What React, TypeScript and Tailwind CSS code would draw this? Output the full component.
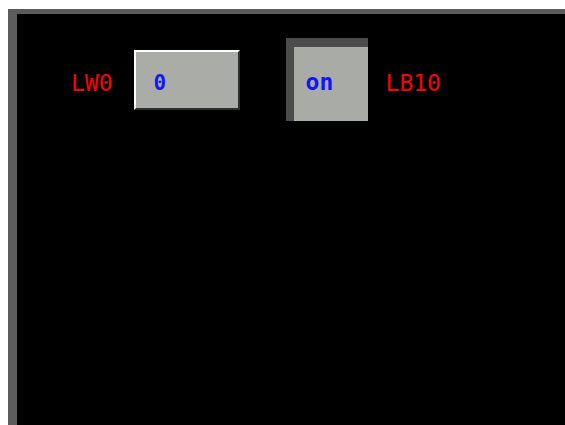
import React from 'react';

const mono = { fontFamily: '"DejaVu Sans Mono", "Liberation Mono", monospace' };

function App() {
  return (
    <div className="w-[565px] h-[425px] bg-white pt-[9px] pl-[8px] overflow-hidden">
      {/* HMI screen */}
      <div className="h-[416px] bg-black border-t-[5px] border-l-[9px] border-[#5c5c5c]">
        <div className="flex items-start pt-[24px] pl-[54px]" style={mono}>
          <span className="mt-[34px] text-[23px] leading-none text-[#ff0000]">LW0</span>

          {/* numeric input */}
          <div className="mt-[12px] ml-[21px] w-[106px] h-[60px] pt-[21px] pl-[18px] bg-[#a9aca7] border-t-2 border-l-2 border-t-white border-l-white border-r-2 border-b-2 border-r-[#2e2e2e] border-b-[#2e2e2e]">
            <span className="block text-[21px] font-bold leading-none text-[#1414f5]">0</span>
          </div>

          {/* toggle button */}
          <div className="ml-[46px] w-[82px] h-[83px] pt-[24px] pl-[12px] bg-[#a8aba6] border-t-[9px] border-l-[8px] border-[#4c4c4c]">
            <span className="block text-[23px] font-bold leading-none text-[#1414f5]">on</span>
          </div>

          <span className="mt-[34px] ml-[18px] text-[23px] leading-none text-[#ff0000]">LB10</span>
        </div>
      </div>
    </div>
  );
}

export default App;
